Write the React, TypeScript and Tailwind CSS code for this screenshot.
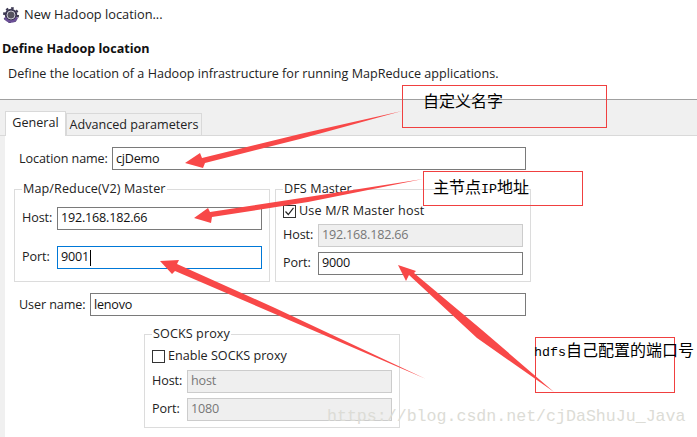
const font = "font-['Open_Sans','Noto_Sans',sans-serif]";

function Field({
  label,
  value,
  className = "",
  labelWidth = "w-[35px]",
  state = "normal",
}: {
  label: string;
  value: string;
  className?: string;
  labelWidth?: string;
  state?: "normal" | "focus" | "disabled";
}) {
  const box =
    state === "focus"
      ? "border-[#0078d7] bg-white text-[#111]"
      : state === "disabled"
        ? "border-[#cccccc] bg-[#efefef] text-[#777]"
        : "border-[#7a7a7a] bg-white text-[#111]";
  return (
    <div className={`flex items-center ${className}`}>
      <span className={`${labelWidth} shrink-0 pt-px tracking-[-0.1px] text-[#222]`}>{label}</span>
      <div className={`flex h-[23px] flex-1 items-center border px-[3px] pt-px tracking-[-0.2px] ${box}`}>
        {value}
        {state === "focus" && <span className="ml-px h-[16px] w-px bg-black" />}
      </div>
    </div>
  );
}

function Check({ checked, label, className = "" }: { checked?: boolean; label: string; className?: string }) {
  return (
    <div className={`mt-[3px] flex items-center gap-[3px] text-[#222] ${className}`}>
      <span className="flex h-[13px] w-[13px] items-center justify-center border border-[#333] bg-white">
        {checked && (
          <svg width="11" height="11" viewBox="0 0 11 11" fill="none" stroke="#222" strokeWidth="1.2">
            <path d="M1.5 5.5 L4.3 8.5 L9.5 1.8" />
          </svg>
        )}
      </span>
      {label}
    </div>
  );
}

function Group({
  title,
  className = "",
  children,
}: {
  title: string;
  className?: string;
  children: React.ReactNode;
}) {
  return (
    <fieldset className={`w-[256px] border border-[#dcdcdc] px-[7px] ${className}`}>
      <legend className="px-px tracking-[0.1px] text-[#222]">{title}</legend>
      {children}
    </fieldset>
  );
}

function Note({ className, children }: { className: string; children: React.ReactNode }) {
  return (
    <div
      className={`absolute border border-[#f04040] font-['Noto_Sans_CJK_SC',sans-serif] text-[16px] leading-[20px] text-black ${className}`}
    >
      {children}
    </div>
  );
}

export default function App() {
  return (
    <div className={`relative h-[437px] w-[697px] overflow-hidden bg-white text-[12.6px] ${font}`}>
      {/* Title */}
      <div className="flex h-[30px] items-center gap-[5px] pl-[3px] text-[12.8px] text-[#222]">
        <svg width="16" height="16" viewBox="0 0 16 16">
          <circle cx="8" cy="8" r="6.2" fill="#3c3852" />
          <circle cx="8" cy="8" r="7" fill="none" stroke="#3c3852" strokeWidth="2" strokeDasharray="2.5 3" />
          <path d="M1 11 A7.5 7.5 0 0 0 15 11 L13 10 A5.5 5.5 0 0 1 3 10 Z" fill="#6b4f97" />
          <circle cx="8" cy="8" r="4" fill="#55535f" stroke="#c9c6d2" strokeWidth="1" />
        </svg>
        New Hadoop location...
      </div>

      {/* Header */}
      <div className="h-[70px] border-b border-[#a0a0a0] pt-[9px]">
        <div className="pl-[2px] font-bold leading-[20px] text-[#111]">Define Hadoop location</div>
        <div className="pl-[8px] pt-[5px] leading-[20px] text-[#222]">
          Define the location of a Hadoop infrastructure for running MapReduce applications.
        </div>
      </div>

      {/* Tabs */}
      <div className="flex h-[36px] items-end border-b border-[#d9d9d9] bg-[#f0f0f0] pl-[5px]">
        <div className="-mb-px flex h-[25px] w-[61px] items-center justify-center border border-b-0 border-[#d9d9d9] bg-white pb-[2px] text-[#222]">
          General
        </div>
        <div className="flex h-[22px] w-[136px] items-center justify-center border border-b-0 border-[#d9d9d9] pt-px text-[#222]">
          Advanced parameters
        </div>
      </div>

      {/* General page */}
      <div className="h-[301px] bg-[#f0f0f0] pl-[5px]">
        <div className="h-full bg-white pl-[9px] pt-[11px]">
          <Field className="w-[512px] pl-[5px]" labelWidth="w-[93px]" label="Location name:" value="cjDemo" />

          <div className="mt-[10px] flex gap-[5px]">
            <Group title="Map/Reduce(V2) Master" className="h-[102px]">
              <Field className="mt-[8px]" label="Host:" value="192.168.182.66" />
              <Field className="mt-[16px]" label="Port:" value="9001" state="focus" />
            </Group>
            <Group title="DFS Master" className="h-[102px]">
              <Check checked label="Use M/R Master host" className="tracking-[0.15px]" />
              <Field className="mt-[3px]" label="Host:" value="192.168.182.66" state="disabled" />
              <Field className="mt-[5px]" label="Port:" value="9000" />
            </Group>
          </div>

          <Field className="mt-[11px] w-[512px] pl-[5px]" labelWidth="w-[71px]" label="User name:" value="lenovo" />

          <Group title="SOCKS proxy" className="ml-[130px] mt-[9px] h-[103px]">
            <Check label="Enable SOCKS proxy" />
            <Field className="mt-[4px]" label="Host:" value="host" state="disabled" />
            <Field className="mt-[5px]" label="Port:" value="1080" state="disabled" />
          </Group>
        </div>
      </div>

      {/* Screenshot annotations */}
      <div className="absolute left-[327px] top-[405px] font-['Liberation_Mono',monospace] text-[16.6px] leading-[24px] whitespace-nowrap text-[#dcdcd6]">
        https://blog.csdn.net/cjDaShuJu_Java
      </div>
      <Note className="left-[402px] top-[85px] h-[43px] w-[205px] pl-[20px] pt-[4px]">自定义名字</Note>
      <Note className="left-[423px] top-[171px] h-[35px] w-[160px] pl-[9px] pt-[4px]">
        主节点<span className="font-['Liberation_Mono',monospace] text-[13.33px]">IP</span>地址
      </Note>
      <Note className="left-[535px] top-[337px] h-[56px] w-[140px] whitespace-nowrap pt-[1px]">
        <span className="-ml-[2px] font-['Liberation_Mono',monospace] text-[13.33px]">hdfs</span>自己配置的端口号
      </Note>
      <svg className="absolute left-0 top-0" width="697" height="437" viewBox="0 0 697 437">
        <polygon points="185,163 200,153 202,158 300,134 402,111 300,139 205,163 203,168" fill="#f84848" />
        <polygon points="194,218 208,208 210,212 308,197 423,179 308,202 212,217 211,223" fill="#f84848" />
        <polygon points="160,261 179,260 177,264 275,308 426,379 275,314 175,271 172,274" fill="#f84848" />
        <polygon points="398,265 416,271 414,273 482,330 554,392 477,338 409,275 406,281" fill="#f84848" />
      </svg>
    </div>
  );
}
